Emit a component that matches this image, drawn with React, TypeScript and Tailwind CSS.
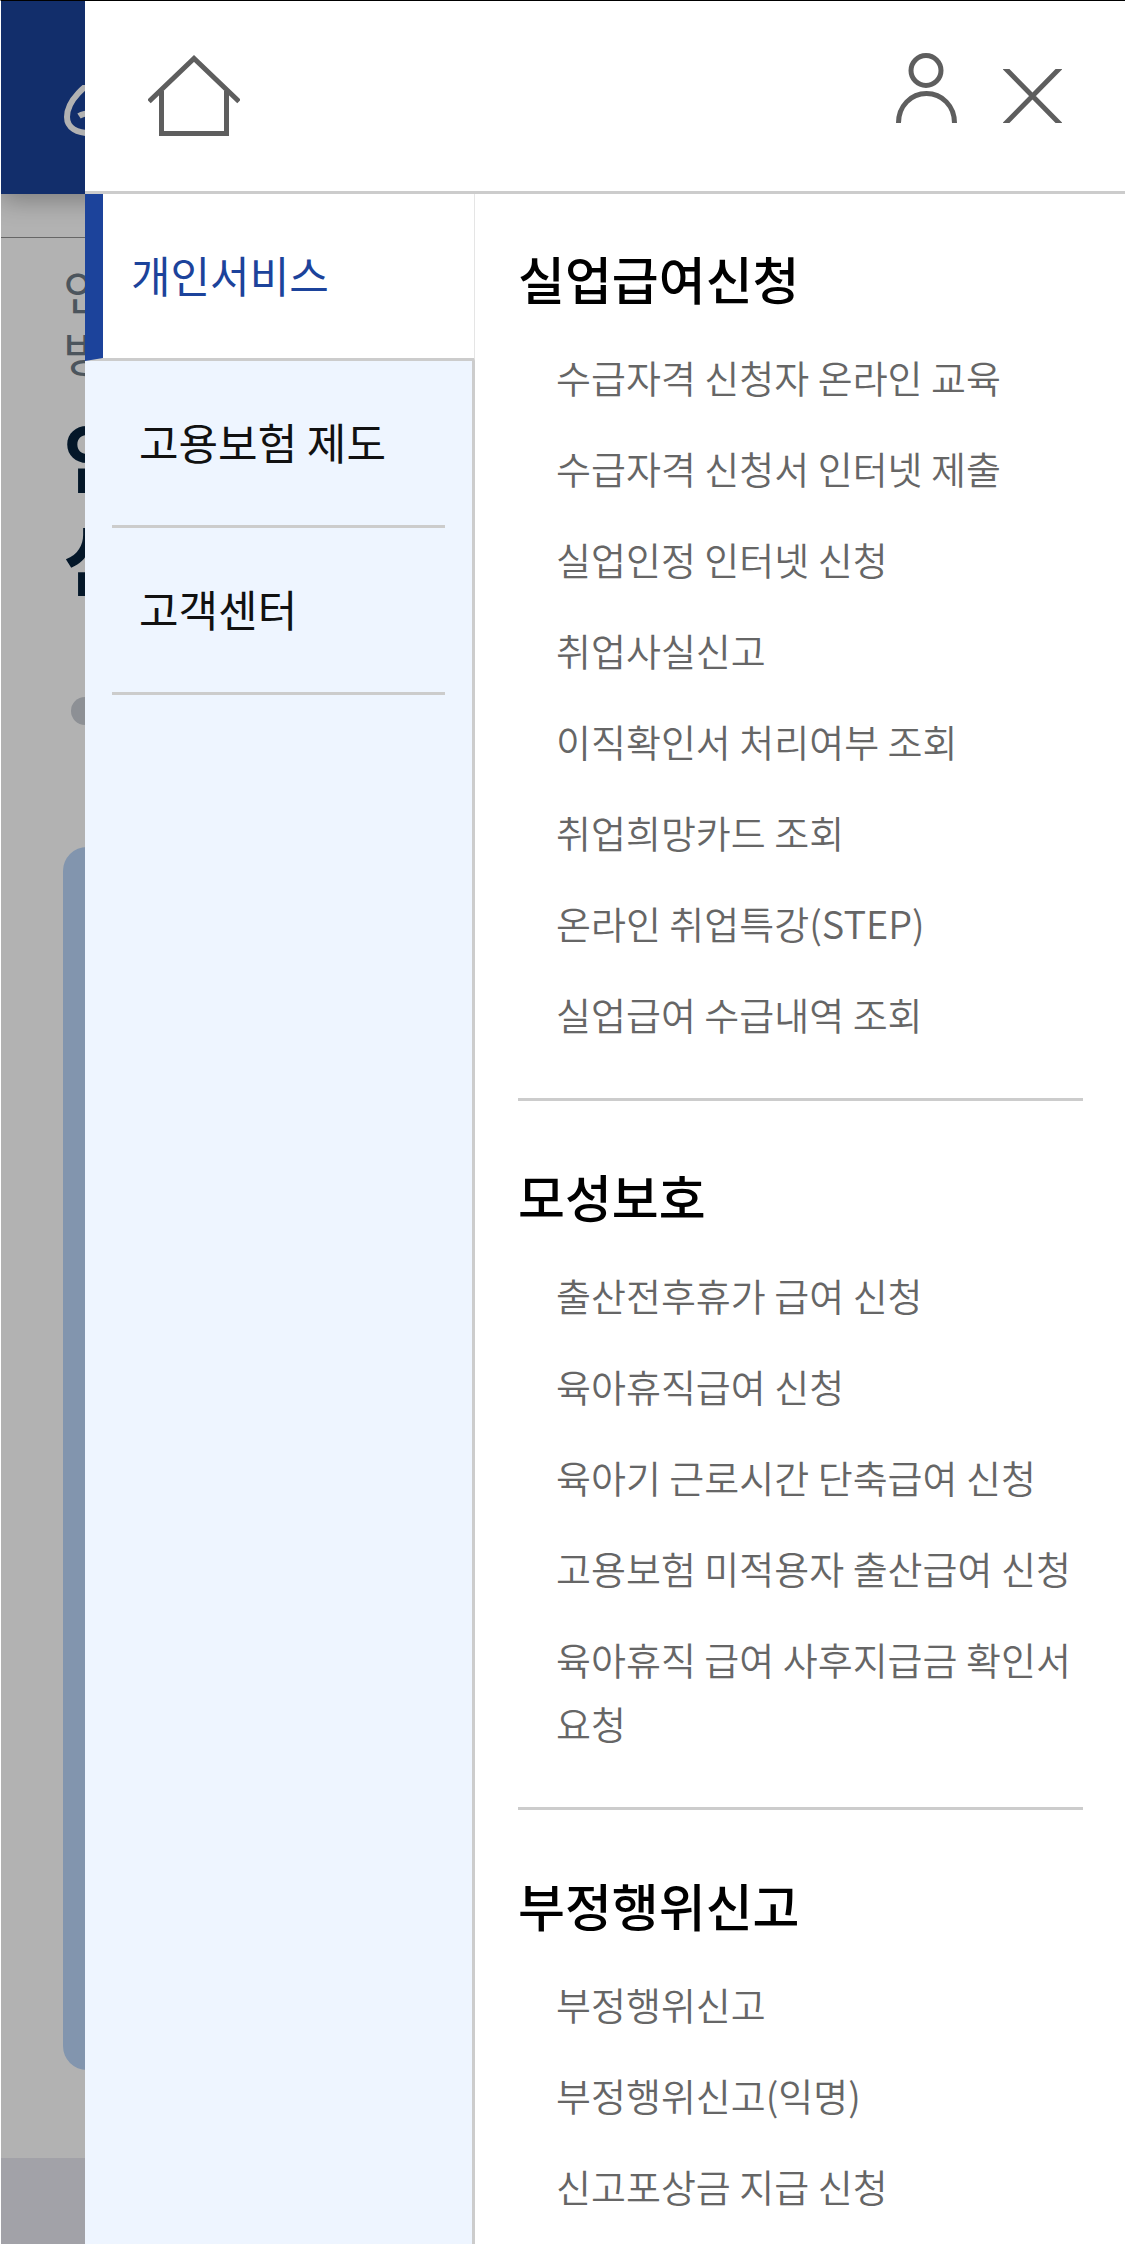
import { useState } from 'react'

type Section = { title: string; items: string[] }

const TABS = ['개인서비스', '고용보험 제도', '고객센터']

const SECTIONS: Section[] = [
  {
    title: '실업급여신청',
    items: [
      '수급자격 신청자 온라인 교육',
      '수급자격 신청서 인터넷 제출',
      '실업인정 인터넷 신청',
      '취업사실신고',
      '이직확인서 처리여부 조회',
      '취업희망카드 조회',
      '온라인 취업특강(STEP)',
      '실업급여 수급내역 조회',
    ],
  },
  {
    title: '모성보호',
    items: [
      '출산전후휴가 급여 신청',
      '육아휴직급여 신청',
      '육아기 근로시간 단축급여 신청',
      '고용보험 미적용자 출산급여 신청',
      '육아휴직 급여 사후지급금 확인서 요청',
    ],
  },
  {
    title: '부정행위신고',
    items: ['부정행위신고', '부정행위신고(익명)', '신고포상금 지급 신청'],
  },
]

function HomeIcon() {
  return (
    <svg width="92" height="82" viewBox="0 0 92 82" fill="none" stroke="#5e5e5e" strokeWidth="5">
      <path d="M1 46.5 46 3.5l45 43" />
      <path d="M13.5 36v42.500h65V36" />
    </svg>
  )
}

function UserIcon() {
  return (
    <svg width="61" height="70" viewBox="0 0 61 70" fill="none" stroke="#5e5e5e" strokeWidth="5">
      <circle cx="30" cy="17.5" r="15" />
      <path d="M2.5 70c0-17 12.5-29.500 28-29.500S58.500 53 58.500 70" />
    </svg>
  )
}

function CloseIcon() {
  return (
    <svg width="59" height="54" viewBox="0 0 59 54" fill="none" stroke="#5e5e5e" strokeWidth="5">
      <path d="M0-3 59 57M59-3 0 57" />
    </svg>
  )
}

// Page that stays visible behind the open drawer
function Backdrop() {
  return (
    <div className="absolute inset-0 flex flex-col overflow-hidden bg-white" aria-hidden="true">
      <div className="relative h-[193px] shrink-0 bg-[#1b429a] pt-[84px] pl-[62px] shadow-[0_6px_24px_rgba(0,0,0,0.3)]">
        <svg width="70" height="54" viewBox="0 0 70 54" fill="none" stroke="#fff" strokeWidth="6">
          <path d="M42-10C22-2 4 16 4 32c0 11 10 16 24 16.500" />
          <path d="M16 31c3-2 8-3 14-3" />
        </svg>
      </div>
      <div className="h-11 shrink-0 border-b border-[#929292]" />
      <div className="flex flex-1 flex-col pl-[62px]">
        <p className="pt-5 text-[48px] leading-[62px] text-[#6d7a86]">
          인<br />방
        </p>
        <p className="pt-5 text-[78px] leading-[103px] font-bold text-[#06223c]">
          인<br />신
        </p>
        <div className="mt-[89px] ml-2 size-7 shrink-0 rounded-full bg-[#cbcfd6]" />
        <div className="mt-[122px] mr-[62px] mb-[88px] flex-1 rounded-[24px] bg-[#bad6f9]" />
      </div>
      <div className="h-[86px] shrink-0 bg-[#e9e9f1]" />
      <div className="absolute inset-0 bg-black/30" />
    </div>
  )
}

export default function App() {
  const [active, setActive] = useState(0)

  return (
    <div className="relative h-screen overflow-hidden border-t border-l border-t-black border-l-white font-['Noto_Sans_CJK_KR',sans-serif] break-keep">
      <Backdrop />

      <div className="relative ml-[84px] flex h-full flex-col bg-white">
        <header className="flex h-[193px] shrink-0 items-center justify-between border-b-3 border-[#ccc] px-[63px]">
          <a href="#home" aria-label="홈">
            <HomeIcon />
          </a>
          <div className="flex items-end gap-[46px] pb-4">
            <button type="button" aria-label="내 정보"><UserIcon /></button>
            <button type="button" aria-label="닫기"><CloseIcon /></button>
          </div>
        </header>

        <div className="flex min-h-0 flex-1">
          {/* Left tabs */}
          <nav className="flex w-[37.5%] shrink-0 flex-col text-[43px] leading-[64px]">
            <button type="button" onClick={() => setActive(0)} aria-pressed={active === 0}
              className="h-[167px] shrink-0 border-r border-b-3 border-l-18 border-r-[#e5e5e5] border-b-[#ccc] border-l-[#1c439b] pb-1 pl-7 text-left text-[#1c439b]">
              {TABS[0]}
            </button>
            <div className="flex flex-1 flex-col border-r-3 border-[#ccc] bg-[#eef5ff] px-[27px]">
              {TABS.slice(1).map((tab, i) => (
                <button key={tab} type="button" onClick={() => setActive(i + 1)} aria-pressed={active === i + 1}
                  className="h-[167px] border-b-3 border-[#ccc] pb-1 pl-[27px] text-left text-[#111]">
                  {tab}
                </button>
              ))}
            </div>
          </nav>

          {/* Menu sections */}
          <main className="min-w-0 flex-1 overflow-y-auto pr-[42px] pl-[43px] [scrollbar-width:none]">
            {SECTIONS.map(section => (
              <section key={section.title} className="border-b-3 border-[#ccc] pt-[59px] pb-[52px] first:pt-12 last:border-b-0">
                <h2 className="text-[51px] leading-[72px] font-medium text-black">{section.title}</h2>
                <ul className="mt-[31px] flex flex-col gap-[27px] pl-[38px]">
                  {section.items.map(item => (
                    <li key={item} className="text-[38px] leading-[64px] font-[350] text-[#666]">
                      <a href="#menu">{item}</a>
                    </li>
                  ))}
                </ul>
              </section>
            ))}
          </main>
        </div>
      </div>
    </div>
  )
}
